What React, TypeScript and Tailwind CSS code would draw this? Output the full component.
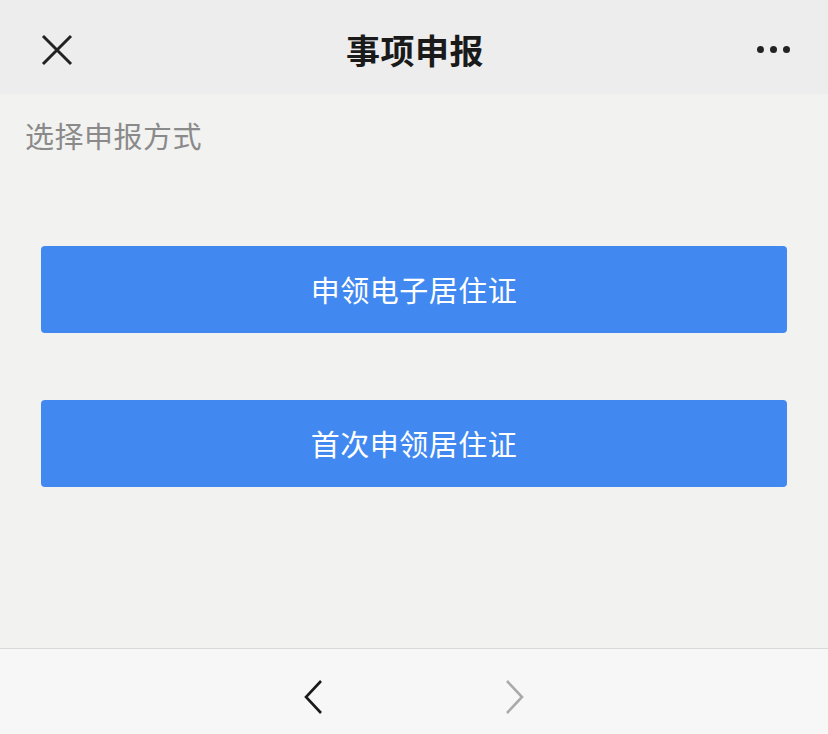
import React from 'react';

const FONT = { fontFamily: '"PingFang SC", "Noto Sans CJK SC", "Noto Sans", sans-serif' };

const OPTIONS = ['申领电子居住证', '首次申领居住证'];

const App = () => {
  return (
    <div className="h-[734px] w-[828px] flex flex-col bg-[#f2f2f1]" style={FONT}>
      {/* Header */}
      <div className="h-[94px] shrink-0 bg-[#ededed] flex items-center justify-between px-[40px] pt-[5px]">
        <svg width="32" height="32" viewBox="0 0 32 32" className="ml-[1px]">
          <path d="M2 2 L30 30 M30 2 L2 30" stroke="#222" strokeWidth="3" strokeLinecap="butt" fill="none" />
        </svg>
        <h1 className="text-[34px] font-bold text-[#1a1a1a] tracking-[0.5px] leading-none">事项申报</h1>
        <div className="flex gap-[6px] mr-[-2px]">
          <span className="w-[7px] h-[7px] rounded-full bg-[#222]"></span>
          <span className="w-[7px] h-[7px] rounded-full bg-[#222]"></span>
          <span className="w-[7px] h-[7px] rounded-full bg-[#222]"></span>
        </div>
      </div>

      {/* Body */}
      <div className="flex-1">
        <p className="pl-[25px] pt-[23px] text-[29px] leading-[36px] text-[#8a8a8a] tracking-[0.5px]">选择申报方式</p>
        <div className="px-[41px] pt-[93px] flex flex-col gap-[67px]">
          {OPTIONS.map((label) => (
            <button
              key={label}
              className="h-[87px] w-full rounded-[4px] bg-[#4189f0] text-white text-[29px] tracking-[0.5px] flex items-center justify-center"
            >
              {label}
            </button>
          ))}
        </div>
      </div>

      {/* Bottom nav */}
      <div className="h-[86px] shrink-0 border-t border-[#d9d9d9] bg-[#f7f7f7] flex items-center justify-center gap-[180px] pt-[10px]">
        <svg width="22" height="36" viewBox="0 0 22 36">
          <path d="M19 2 L4 18 L19 34" stroke="#1a1a1a" strokeWidth="2.6" fill="none" />
        </svg>
        <svg width="22" height="36" viewBox="0 0 22 36">
          <path d="M3 2 L18 18 L3 34" stroke="#aaaaaa" strokeWidth="2.6" fill="none" />
        </svg>
      </div>
    </div>
  );
};

export default App;
